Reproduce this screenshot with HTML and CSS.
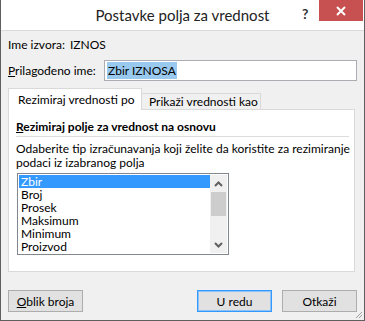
FILE: index.html
```html
<!DOCTYPE html>
<html lang="sr">
<head>
  <meta charset="UTF-8">
  <meta name="viewport" content="width=device-width, initial-scale=1.0">
  <title>Postavke polja za vrednost</title>
  <link rel="stylesheet" href="styles.css">
</head>
<body>

  <div class="dialog">
    <div class="naslovna-traka">
      <div class="naslov">Postavke polja za vrednost</div>
      <div class="pomoc">?</div>
      <div class="zatvori">
        <svg width="10" height="10" viewBox="0 0 10 10">
          <path d="M1 1 L9 9 M9 1 L1 9" stroke="#fff" stroke-width="2"/>
        </svg>
      </div>
    </div>

    <div class="sadrzaj">
      <div class="red izvor">
        <span class="oznaka">Ime izvora:</span>
        <span>IZNOS</span>
      </div>

      <div class="red prilagodjeno">
        <label class="oznaka"><u>P</u>rilagođeno ime:</label>
        <div class="polje"><span class="izbor">Zbir IZNOSA</span></div>
      </div>

      <div class="kartice">
        <div class="kartica aktivna">Rezimiraj vrednosti po</div>
        <div class="kartica">Prikaži vrednosti kao</div>
      </div>

      <div class="panel">
        <div class="grupa"><u>R</u>ezimiraj polje za vrednost na osnovu</div>
        <p class="uputstvo">Odaberite tip izračunavanja koji želite da koristite za rezimiranje<br>podaci iz izabranog polja</p>

        <div class="lista">
          <ul class="stavke">
            <li class="izabrana">Zbir</li>
            <li>Broj</li>
            <li>Prosek</li>
            <li>Maksimum</li>
            <li>Minimum</li>
            <li>Proizvod</li>
          </ul>
          <div class="klizac">
            <div class="strelica">
              <svg width="9" height="6" viewBox="0 0 9 6"><path d="M1 5 L4.5 1.5 L8 5" stroke="#606060" stroke-width="2" fill="none"/></svg>
            </div>
            <div class="palac"></div>
            <div class="staza"></div>
            <div class="strelica">
              <svg width="9" height="6" viewBox="0 0 9 6"><path d="M1 1 L4.5 4.5 L8 1" stroke="#606060" stroke-width="2" fill="none"/></svg>
            </div>
          </div>
        </div>
      </div>

      <div class="dugmad">
        <button class="dugme"><u>O</u>blik broja</button>
        <span class="razmak"></span>
        <button class="dugme podrazumevano">U redu</button>
        <button class="dugme">Otkaži</button>
      </div>
    </div>

    <svg class="hvataljka" width="8" height="8" viewBox="0 0 8 8">
      <path d="M7 1 L1 7 M7 4 L4 7" stroke="#a0a0a0" stroke-width="1"/>
    </svg>
  </div>

</body>
</html>
```

FILE: styles.css
```css
body {
  margin: 0;
  font-family: Lato, 'Noto Sans', Arial, sans-serif;
  font-size: 12px;
  color: #000;
  background-color: #f0f0f0;
  white-space: nowrap;
}

.dialog {
  position: relative;
  box-sizing: border-box;
  width: 365px;
  height: 321px;
  border: 1px solid #5f5f5f;
  border-top: none;
  background-color: #f0f0f0;
}

.naslovna-traka {
  position: relative;
  height: 30px;
  background-color: #fff;
  border-bottom: 1px solid #dadada;
  display: flex;
  justify-content: center;
  align-items: center;
}

.naslov {
  font-size: 15px;
  color: #222;
}

.pomoc {
  position: absolute;
  left: 301px;
  top: 5px;
  font-size: 14px;
  font-weight: bold;
  color: #333;
}

.zatvori {
  position: absolute;
  left: 318px;
  top: 0;
  width: 44px;
  height: 21px;
  background-color: #c75050;
  display: flex;
  justify-content: center;
  align-items: center;
}

.sadrzaj {
  padding: 0 7px 0 7px;
}

.red {
  display: flex;
  align-items: center;
  line-height: 14px;
}

.izvor {
  margin-top: 7px;
}

.izvor .oznaka {
  width: 62px;
}

.prilagodjeno {
  margin-top: 8px;
}

.prilagodjeno .oznaka {
  width: 96px;
}

.polje {
  box-sizing: border-box;
  flex: 1;
  height: 21px;
  background-color: #fff;
  border: 1px solid #abadb3;
  padding: 2px 2px;
  line-height: 15px;
}

.izbor {
  background-color: #99c9ef;
  padding: 1px 1px;
}

.kartice {
  display: flex;
  align-items: flex-end;
  margin-top: 7px;
  height: 22px;
  position: relative;
  z-index: 1;
  margin-bottom: -1px;
}

.kartica {
  box-sizing: border-box;
  border: 1px solid #d9d9d9;
  border-bottom: none;
  line-height: 14px;
}

.kartica.aktivna {
  height: 22px;
  width: 134px;
  padding: 4px 0 0 9px;
  background-color: #fff;
}

.kartica:not(.aktivna) {
  width: 120px;
  height: 16px;
  padding: 1px 0 0 7px;
  margin-left: -1px;
  margin-bottom: 1px;
  background-color: #f0f0f0;
}

.panel {
  box-sizing: border-box;
  height: 163px;
  margin-right: 2px;
  background-color: #fff;
  border: 1px solid #d9d9d9;
  padding: 10px 5px 0 7px;
}

.grupa {
  font-weight: bold;
  line-height: 14px;
  padding-bottom: 2px;
  border-bottom: 1px solid #dcdcdc;
}

.uputstvo {
  margin: 5px 0 0 0;
  line-height: 14px;
}

.lista {
  box-sizing: border-box;
  display: flex;
  width: 212px;
  height: 82px;
  margin-top: 3px;
  margin-left: 1px;
  border: 1px solid #828790;
  padding: 1px;
  background-color: #fff;
}

.stavke {
  flex: 1;
  list-style: none;
  margin: 0;
  padding: 0;
}

.stavke li {
  height: 13px;
  line-height: 13px;
  padding-left: 2px;
}

.stavke li.izabrana {
  background-color: #3399ff;
  color: #fff;
}

.klizac {
  width: 17px;
  display: flex;
  flex-direction: column;
  background-color: #f0f0f0;
}

.strelica {
  height: 17px;
  display: flex;
  justify-content: center;
  align-items: center;
}

.palac {
  height: 24px;
  margin: 0 1px;
  background-color: #cdcdcd;
}

.staza {
  flex: 1;
}

.dugmad {
  display: flex;
  gap: 10px;
  margin-top: 18px;
}

.razmak {
  flex: 1;
}

.dugme {
  box-sizing: border-box;
  width: 75px;
  height: 22px;
  font-family: inherit;
  font-size: 12px;
  color: #000;
  background-color: #e1e1e1;
  border: 1px solid #adadad;
  padding: 0;
}

.dugme.podrazumevano {
  border-color: #3399ff;
  box-shadow: inset 0 0 0 1px #8cc2f5;
}

.hvataljka {
  position: absolute;
  right: 1px;
  bottom: 1px;
}
```
